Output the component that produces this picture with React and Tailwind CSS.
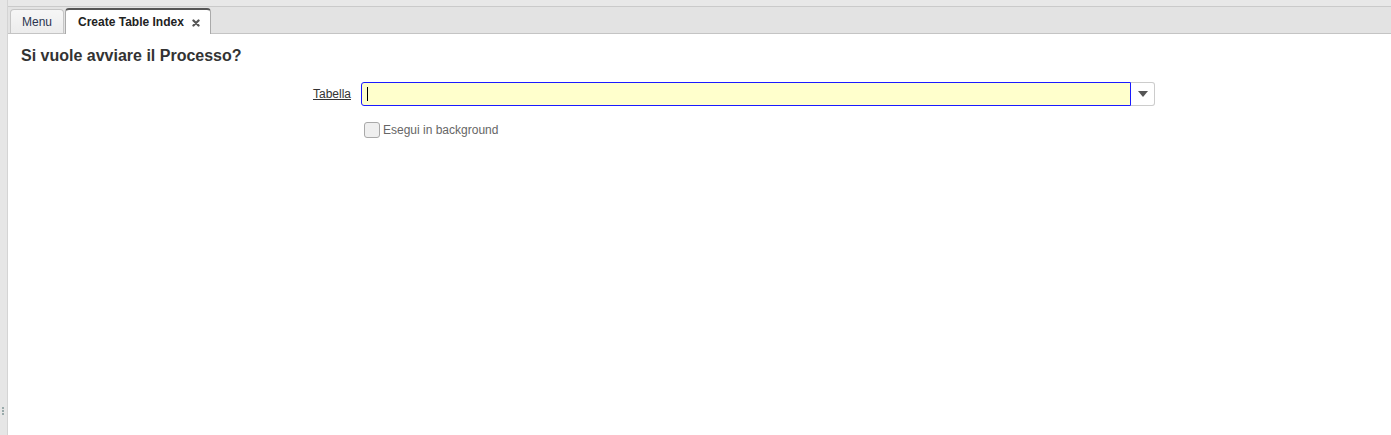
function Tab({ label, active, closable }) {
  if (active) {
    return (
      <div className="relative -mb-px flex h-[26px] items-center gap-[8px] rounded-t-[4px] border border-b-0 border-[#aaa] border-t-[#555] border-t-2 bg-white pl-[12px] pr-[10px] text-[12px] font-bold text-[#222]">
        <span>{label}</span>
        {closable && (
          <svg width="8" height="8" viewBox="0 0 10 10" className="mt-px">
            <path d="M1.8 1.8 L8.2 8.2 M8.2 1.8 L1.8 8.2" stroke="#555" strokeWidth="2.8" strokeLinecap="round" />
          </svg>
        )}
      </div>
    );
  }
  return (
    <div className="flex h-[24px] items-center rounded-t-[4px] border border-b-0 border-[#c5c5c5] bg-gradient-to-b from-[#f6f6f6] to-[#ececec] px-[11px] text-[12px] text-[#2b3550]">
      {label}
    </div>
  );
}

export default function App() {
  return (
    <div
      className="flex h-[435px] w-full overflow-hidden bg-white"
      style={{ fontFamily: '"Liberation Sans", Arial, sans-serif' }}
    >
      <div className="relative w-[8px] shrink-0 border-r border-[#d4d4d4] bg-[#e6e6e6]">
        <div className="absolute left-[2px] top-[407px] flex flex-col gap-[1px]">
          <span className="h-[2px] w-[2px] bg-[#9aa]" />
          <span className="h-[2px] w-[2px] bg-[#9aa]" />
          <span className="h-[2px] w-[2px] bg-[#9aa]" />
        </div>
      </div>
      <div className="flex min-w-0 flex-1 flex-col">
        <div className="h-[7px] border-b border-[#cacaca] bg-[#e8e8e8]" />
        <div className="flex h-[27px] items-end gap-[1px] border-b border-[#c4c4c4] bg-[#e3e3e3] pl-[2px]">
          <Tab label="Menu" />
          <Tab label="Create Table Index" active closable />
        </div>
        <div className="flex-1 bg-white">
          <h1 className="ml-[13px] mt-[12px] text-[16px] font-bold leading-[20px] text-[#333]">
            Si vuole avviare il Processo?
          </h1>
          <div className="mt-[16px] flex items-center">
            <label className="w-[343px] text-right text-[12px] text-[#333] underline">Tabella</label>
            <div className="ml-[10px] flex h-[24px]">
              <div className="flex w-[770px] items-center rounded-l-[3px] border border-[#1a1aff] bg-[#ffffcc] pl-[5px]">
                <span className="h-[14px] w-px bg-black" />
              </div>
              <button className="flex w-[24px] items-center justify-center rounded-r-[3px] border border-l-0 border-[#ccc] bg-white">
                <svg width="10" height="6" viewBox="0 0 10 6">
                  <path d="M0 0 L10 0 L5 6 Z" fill="#555" />
                </svg>
              </button>
            </div>
          </div>
          <div className="ml-[356px] mt-[15px] flex items-center gap-[3px]">
            <span className="h-[16px] w-[16px] rounded-[3px] border border-[#a9a9a9] bg-[#efefef]" />
            <span className="text-[12px] text-[#666]">Esegui in background</span>
          </div>
        </div>
      </div>
    </div>
  );
}
